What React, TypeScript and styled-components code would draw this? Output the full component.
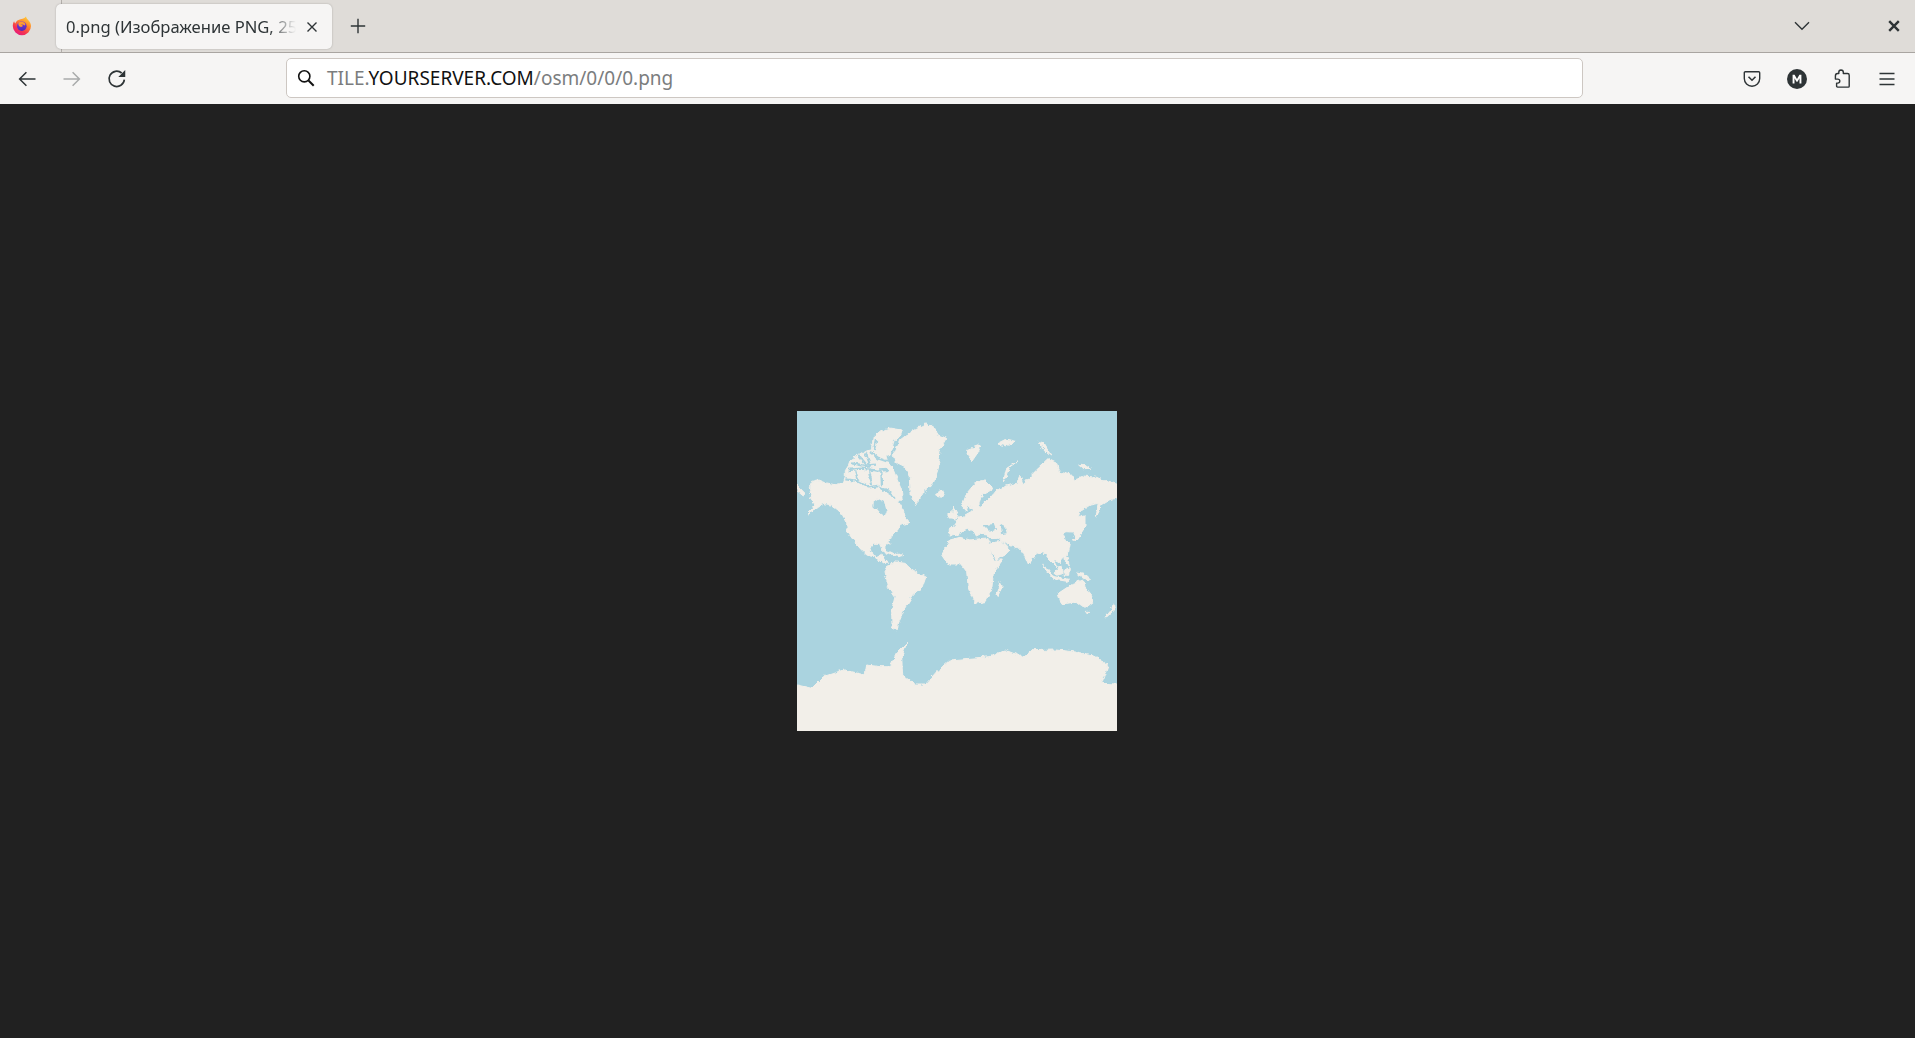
import React from "react"
import styled, { createGlobalStyle } from "styled-components"

const GlobalStyle = createGlobalStyle`
	html, body {
		margin: 0;
		padding: 0;
		height: 100%;
		overflow: hidden;
		background: #212121;
	}
	#root {
		height: 100%;
	}
`

const Page = styled.div`
	display: flex;
	flex-direction: column;
	height: 100vh;
	font-family: "Noto Sans", "Open Sans", sans-serif;
`

const TabBar = styled.div`
	display: flex;
	align-items: center;
	height: 52px;
	flex: none;
	background: #dfdcd8;
	border-bottom: 1px solid #a9a5a1;
`

const FirefoxCell = styled.div`
	display: flex;
	align-items: center;
	align-self: stretch;
	width: 50px;
	padding-left: 11px;
	box-sizing: content-box;
	margin-right: -11px;
	border-right: 1px solid #b3afab;
	background: #e1dedb;

	svg {
		flex: none;
	}
`

const Tab = styled.div`
	display: flex;
	align-items: center;
	width: 276px;
	height: 45px;
	margin-left: 5px;
	margin-top: 1px;
	padding: 0 14px 0 10px;
	box-sizing: border-box;
	background: #f6f5f4;
	border-radius: 5px;
	box-shadow: 0 0 2px rgba(0, 0, 0, 0.25);
`

const TabTitle = styled.span`
	flex: 1;
	overflow: hidden;
	white-space: nowrap;
	font-size: 16.6px;
	color: #2e3436;
	margin-bottom: 1px;
	-webkit-mask-image: linear-gradient(to right, #000 88%, transparent 100%);
	mask-image: linear-gradient(to right, #000 88%, transparent 100%);
`

const IconButton = styled.button<{ $left?: number; $right?: number }>`
	display: flex;
	align-items: center;
	justify-content: center;
	flex: none;
	width: 24px;
	height: 24px;
	padding: 0;
	border: 0;
	background: transparent;
	margin-left: ${props => props.$left ?? 0}px;
	margin-right: ${props => props.$right ?? 0}px;
`

const Spacer = styled.div`
	flex: 1;
`

const NavBar = styled.div`
	display: flex;
	align-items: center;
	height: 51px;
	flex: none;
	background: #f6f5f4;
	padding-left: 15px;
	box-sizing: border-box;
`

const UrlBar = styled.div`
	display: flex;
	align-items: center;
	width: 1297px;
	height: 40px;
	margin-left: 157px;
	margin-bottom: 1px;
	padding-left: 10px;
	box-sizing: border-box;
	background: #ffffff;
	border: 1px solid #cdc7c2;
	border-radius: 5px;
	font-size: 19px;
	white-space: nowrap;
`

const UrlText = styled.span`
	margin-left: 12px;
	margin-bottom: 1px;
	color: #7b7d7e;
`

const UrlHost = styled.span`
	color: #111111;
`

const Viewer = styled.main`
	flex: 1;
	display: flex;
	align-items: center;
	justify-content: center;
	background: #212121;
`

const TileFrame = styled.div`
	width: 320px;
	height: 320px;
	flex: none;
	margin-right: 1px;
	background: #aad3df;
	overflow: hidden;
`

const FirefoxLogo = () => (
	<svg width="22" height="22" viewBox="0 0 22 22">
		<defs>
			<linearGradient id="ffOuter" x1="0.8" y1="0" x2="0.2" y2="1">
				<stop offset="0" stopColor="#ffd43a" />
				<stop offset="0.35" stopColor="#ff8a2b" />
				<stop offset="0.7" stopColor="#f5344f" />
				<stop offset="1" stopColor="#e31587" />
			</linearGradient>
			<linearGradient id="ffInner" x1="0.5" y1="0" x2="0.5" y2="1">
				<stop offset="0" stopColor="#7a3be0" />
				<stop offset="1" stopColor="#4d2ab8" />
			</linearGradient>
		</defs>
		<path d="M15 1.5c.4 2 1.4 2.7 2.6 4 1.4 1.6 2.4 3.4 2.4 5.6a9.1 9.1 0 1 1-18.2 0c0-1.7.4-3.4 1.3-4.8.2 1 .6 1.7 1.2 2.2.4-1.7 1.6-3 3.2-3.6 2.8-.8 5.6-1 7.5-3.4z" fill="url(#ffOuter)" />
		<circle cx="10.8" cy="11.2" r="4.8" fill="url(#ffInner)" />
		<path d="M7.5 7.6c2.2-1.3 5.4-.9 6.6 1 .5.9.2 1.6-.4 1.9-1.2-1-3-1.4-4.2-.8 1.3-.1 2.3.6 2.5 1.4-.8.9-2.3 1-3.4.4-1-.6-1.6-2.2-1.1-3.9z" fill="#ff9c2e" />
	</svg>
)

const CloseIcon = () => (
	<svg width="14" height="14" viewBox="0 0 14 14" fill="none" stroke="#2e3436" strokeWidth="1.4">
		<path d="M2.5 2.5l9 9M11.5 2.5l-9 9" />
	</svg>
)

const PlusIcon = () => (
	<svg width="16" height="16" viewBox="0 0 16 16" fill="none" stroke="#2e3436" strokeWidth="1.4">
		<path d="M8 .8v14.4M.8 8h14.4" />
	</svg>
)

const ChevronIcon = () => (
	<svg width="16" height="10" viewBox="0 0 16 10" fill="none" stroke="#2e3436" strokeWidth="1.4">
		<path d="M1 1.2l7 7 7-7" />
	</svg>
)

const WindowCloseIcon = () => (
	<svg width="12" height="12" viewBox="0 0 12 12" fill="none" stroke="#2e3436" strokeWidth="2.4">
		<path d="M1.2 1.2l9.6 9.6M10.8 1.2l-9.6 9.6" />
	</svg>
)

const ArrowIcon = ({ flip, color }: { flip?: boolean; color: string }) => (
	<svg width="18" height="16" viewBox="0 0 18 16" fill="none" stroke={color} strokeWidth="1.5" style={flip ? { transform: "scaleX(-1)" } : undefined}>
		<path d="M17.5 8H1.6M8.4 1.2L1.6 8l6.8 6.8" />
	</svg>
)

const ReloadIcon = () => (
	<svg width="20" height="20" viewBox="0 0 18 18" fill="none">
		<path d="M15.6 9.6A6.9 6.9 0 1 1 13.2 3.6" stroke="#2e3436" strokeWidth="1.5" />
		<path d="M16.4 .9v6.2h-6.2z" fill="#2e3436" />
	</svg>
)

const SearchIcon = () => (
	<svg width="18" height="18" viewBox="0 0 18 18" fill="none" stroke="#111111">
		<circle cx="7.3" cy="7.3" r="5.6" strokeWidth="1.6" />
		<path d="M11.5 11.5l5.2 5.2" strokeWidth="2" />
	</svg>
)

const PocketIcon = () => (
	<svg width="18" height="18" viewBox="0 0 18 18" fill="none" stroke="#2e3436" strokeWidth="1.4">
		<path d="M2.3 1.7h13.4c.6 0 1 .4 1 1v5.8a7.7 7.7 0 0 1-15.4 0V2.7c0-.6.4-1 1-1z" />
		<path d="M5.5 6.8L9 10.2l3.5-3.4" strokeWidth="1.6" />
	</svg>
)

const AccountIcon = () => (
	<svg width="20" height="20" viewBox="0 0 20 20">
		<circle cx="10" cy="10" r="10" fill="#2e3436" />
		<path d="M5.6 14.4V5.8h2l2.4 4.3 2.4-4.3h2v8.6h-1.9V9.2l-2 3.5h-1l-2-3.5v5.2z" fill="#ffffff" />
	</svg>
)

const PuzzleIcon = () => (
	<svg width="18" height="20" viewBox="0 0 18 20" fill="none" stroke="#2e3436" strokeWidth="1.4" strokeLinejoin="round">
		<path d="M8 1a2.3 2.3 0 0 1 2.3 2.3v1.2h4.2c1 0 1.7.7 1.7 1.7v11c0 .5-.4.9-.9.9H4.6c-.6 0-1-.4-1-1v-3h1.2a2 2 0 0 0 0-4H2.4V7c0-1.3.9-2.5 2.2-2.5h1.2V3.3A2.3 2.3 0 0 1 8 1z" />
	</svg>
)

const MenuIcon = () => (
	<svg width="16" height="14" viewBox="0 0 16 14" fill="none" stroke="#2e3436" strokeWidth="1.4">
		<path d="M.5 1.5h15M.5 7h15M.5 12.5h15" />
	</svg>
)

// coordinates are 3x tile pixels, offset by the viewBox origin
const LAND_PATHS = [
	// north america with the arctic islands merged in, channels are cut out below
	"M58 262L68 244L84 240L104 248L130 254L160 250L166 232L166 212L176 196L182 180L206 164L222 154L244 150L250 112L272 92L300 84L336 90L332 104L312 122L306 150L300 166L288 170L296 190L310 210L322 240L334 268L336 296L326 306L340 330L346 352L360 368L344 372L332 376L318 392L304 408L296 428L284 440L290 460L278 452L268 430L250 430L240 445L246 464L262 470L276 462L282 478L296 490L280 490L250 470L230 465L210 445L190 420L172 395L170 370L150 335L125 315L100 310L85 322L52 345L75 315L60 295L62 280Z",
	"M21 255L45 280L40 288L21 272Z",
	// greenland
	"M310 166L330 120L370 90L405 72L430 80L445 105L470 115L450 150L445 205L430 250L395 280L385 305L375 310L360 280L358 230L345 200L315 185Z",
	"M437 280L455 272L467 280L460 292L442 290Z",
	// caribbean
	"M282 451L302 456L322 466L300 462Z",
	"M322 462L338 466L326 470Z",
	// south america
	"M285 515L296 496L310 485L345 490L362 506L375 515L407 530L395 565L370 585L345 625L325 670L322 692L306 682L305 630L315 590L295 560Z",
	// uk and ireland
	"M490 320L506 350L500 358L478 352L488 335Z",
	"M474 342L484 340L484 354L474 354Z",
	// scandinavia
	"M515 320L530 280L560 245L585 240L610 265L600 272L580 282L570 300L562 330L548 335L538 310L530 336Z",
	// eurasia
	"M478 385L495 375L505 358L525 345L552 330L575 318L600 295L620 270L650 258L680 250L690 225L700 255L720 230L745 205L775 178L800 190L805 215L845 225L850 240L880 228L920 232L950 245L981 252L990 252L990 290L960 300L935 315L918 352L925 310L900 315L870 335L865 350L885 345L885 380L862 420L850 396L825 395L820 415L838 430L832 460L808 488L790 480L800 500L775 475L760 455L740 460L715 495L700 460L690 445L655 435L625 415L596 416L590 402L572 400L556 408L548 392L534 384L515 392L508 405L478 408Z",
	// arabia
	"M592 430L636 424L660 450L620 480L608 460Z",
	// africa
	"M455 465L480 420L510 412L540 420L590 414L596 430L610 480L640 480L610 520L605 570L585 605L555 610L535 565L530 515L515 495L475 495Z",
	"M618 582L630 548L636 560L626 586Z",
	// australia
	"M805 580L850 550L880 540L885 560L905 585L908 610L885 625L860 605L815 612Z",
	"M886 634L896 634L892 642Z",
	"M945 652L964 630L960 645Z",
	"M962 622L974 612L976 628L966 632Z",
	// south east asia
	"M758 496L772 506L796 536L786 534Z",
	"M792 530L838 538L832 544L796 538Z",
	"M794 518L812 496L822 520L800 526Z",
	"M824 510L838 502L836 526L826 526Z",
	"M860 516L880 520L902 540L878 534Z",
	"M824 464L832 476L838 498L826 484Z",
	// japan and sakhalin
	"M850 420L872 396L884 346L880 392L860 422Z",
	"M918 350L934 306L930 328Z",
	// arctic russia
	"M640 245L650 205L685 182L660 200L652 225Z",
	"M530 150L570 135L562 160L545 185Z",
	"M622 132L650 118L676 124L650 138Z",
	"M745 125L760 128L782 165L762 148Z",
	"M866 195L884 192L902 205L878 206Z",
	// antarctica
	"M0 855L21 855L65 865L100 830L160 810L225 825L230 795L270 800L300 800L320 760L350 730L335 770L338 825L375 855L405 855L440 815L480 780L540 775L600 770L645 750L700 772L725 752L800 750L850 755L910 765L955 795L935 850L981 852L1000 852V1010H0Z",
]

// seas filled over the land
const WATER_FILLS = [
	"M252 304L264 296L282 306L290 332L284 348L266 336L250 318Z",
	"M632 372L644 376L650 400L636 402Z",
	"M580 376L612 372L618 386L596 392Z",
	"M262 258L296 268L318 296L304 288L282 274Z",
]

// channels through the arctic islands
const WATER_CHANNELS = [
	"M166 238L200 242L238 262L262 258",
	"M176 210L214 206L262 212L292 210",
	"M186 190L224 198L258 194",
	"M206 166L232 198",
	"M226 156L240 196",
	"M240 156L268 176L296 186",
	"M236 206L246 256",
	"M274 214L276 256",
	"M196 214L204 240",
	"M258 120L252 150",
]

const CoastFilter = () => (
	<filter id="tileCoast" x="-5%" y="-5%" width="110%" height="110%">
		<feTurbulence type="fractalNoise" baseFrequency="0.07" numOctaves="3" seed="4" result="noise" />
		<feDisplacementMap in="SourceGraphic" in2="noise" scale="14" xChannelSelector="R" yChannelSelector="G" />
		<feGaussianBlur stdDeviation="1.6" />
	</filter>
)

const WorldMap = () => (
	<svg width="320" height="320" viewBox="21 33 960 960" style={{ display: "block" }}>
		<defs>
			<CoastFilter />
		</defs>
		<g filter="url(#tileCoast)">
			<g fill="#f2efe9" stroke="#f2efe9" strokeWidth="3" strokeLinejoin="round">
				{LAND_PATHS.map(d => <path key={d} d={d} />)}
			</g>
			<g fill="#aad3df">
				{WATER_FILLS.map(d => <path key={d} d={d} />)}
			</g>
			<g fill="none" stroke="#aad3df" strokeWidth="7">
				{WATER_CHANNELS.map(d => <path key={d} d={d} />)}
			</g>
		</g>
	</svg>
)

const App = (): JSX.Element => (
	<Page>
		<GlobalStyle />
		<TabBar>
			<FirefoxCell>
				<FirefoxLogo />
			</FirefoxCell>
			<Tab>
				<TabTitle>0.png (Изображение PNG, 256 × 256 пикселов)</TabTitle>
				<IconButton $left={4} $right={-6}>
					<CloseIcon />
				</IconButton>
			</Tab>
			<IconButton $left={14}>
				<PlusIcon />
			</IconButton>
			<Spacer />
			<IconButton $right={68}>
				<ChevronIcon />
			</IconButton>
			<IconButton $right={9}>
				<WindowCloseIcon />
			</IconButton>
		</TabBar>
		<NavBar>
			<IconButton>
				<ArrowIcon color="#2e3436" />
			</IconButton>
			<IconButton $left={21}>
				<ArrowIcon flip color="#a9abab" />
			</IconButton>
			<IconButton $left={21}>
				<ReloadIcon />
			</IconButton>
			<UrlBar>
				<SearchIcon />
				<UrlText>
					TILE.<UrlHost>YOURSERVER.COM</UrlHost>/osm/0/0/0.png
				</UrlText>
			</UrlBar>
			<Spacer />
			<IconButton $right={21}>
				<PocketIcon />
			</IconButton>
			<IconButton $right={21}>
				<AccountIcon />
			</IconButton>
			<IconButton $right={21}>
				<PuzzleIcon />
			</IconButton>
			<IconButton $right={16}>
				<MenuIcon />
			</IconButton>
		</NavBar>
		<Viewer>
			<TileFrame>
				<WorldMap />
			</TileFrame>
		</Viewer>
	</Page>
)

export default App
